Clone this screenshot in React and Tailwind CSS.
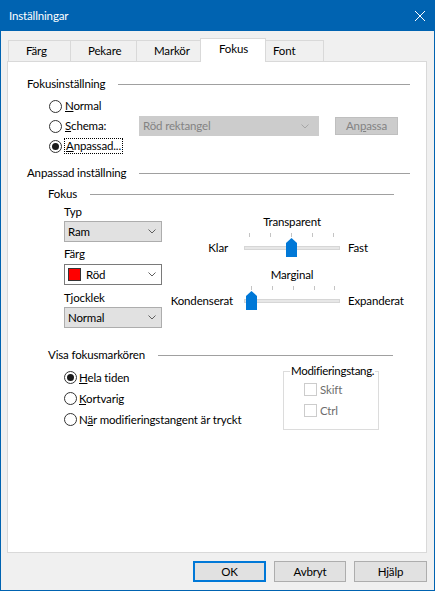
import React from "react";

const Chevron = ({ color = "#5f5f5f" }) => (
  <svg width="8" height="5" viewBox="0 0 8 5">
    <polyline points="0.5,0.5 4,4 7.5,0.5" fill="none" stroke={color} strokeWidth="1" />
  </svg>
);

const Radio = ({ checked }) => (
  <span className="flex h-[13px] w-[13px] shrink-0 items-center justify-center rounded-full border border-[#333333] bg-white">
    {checked && <span className="h-[7px] w-[7px] rounded-full bg-[#1a1a1a]" />}
  </span>
);

const Section = ({ label, className }) => (
  <div className={`flex h-[16px] items-center ${className}`}>
    <span className="whitespace-nowrap">{label}</span>
    <div className="ml-[13px] h-px flex-1 bg-[#a0a0a0]" />
  </div>
);

const Combo = ({ children, white }) => (
  <div
    className={
      white
        ? "flex h-[21px] items-center justify-between border border-[#7a7a7a] bg-white pl-[3px] pr-[5px]"
        : "flex h-[21px] items-center justify-between border border-[#adadad] bg-[#e1e1e1] pl-[3px] pr-[5px]"
    }
  >
    <div className="flex items-center">{children}</div>
    <Chevron />
  </div>
);

// track + ticks + thumb
const SliderTrack = ({ ticks, thumb }) => (
  <svg width="96" height="28" viewBox="0 0 96 28" className="shrink-0">
    {ticks.map((t) => (
      <line key={t} x1={t + 0.5} y1="3" x2={t + 0.5} y2="7" stroke="#c4c4c4" />
    ))}
    <rect x="0.5" y="16.5" width="95" height="3" fill="#e7e7e7" stroke="#d6d6d6" />
    <path
      d={`M${thumb} 5 L${thumb + 5.5} 0 L${thumb + 11} 5 L${thumb + 11} 19 L${thumb} 19 Z`}
      transform="translate(0 8)"
      fill="#0078d7"
    />
  </svg>
);

const Slider = ({ title, left, right, leftPad, ticks, thumb, className }) => (
  <div className={className}>
    <div className="ml-[82px] w-[96px] text-center">{title}</div>
    <div className="flex">
      <div className={`w-[82px] whitespace-nowrap pt-[10px] text-right ${leftPad}`}>{left}</div>
      <SliderTrack ticks={ticks} thumb={thumb} />
      <div className="ml-[8px] whitespace-nowrap pt-[10px]">{right}</div>
    </div>
  </div>
);

const Checkbox = () => (
  <span className="h-[13px] w-[13px] shrink-0 border border-[#cccccc] bg-white" />
);

const tabs = [
  { name: "Färg", w: "w-[62px] pl-[17px]" },
  { name: "Pekare", w: "w-[66px] pl-[17px]" },
  { name: "Markör", w: "w-[64px] pl-[17px]" },
  { name: "Fokus", w: "w-[66px] pl-[18px]", active: true },
  { name: "Font", w: "w-[58px] pl-[7px]", last: true },
];

export default function App() {
  return (
    <div className="flex h-[591px] w-[435px] flex-col border-x border-b border-[#0063b1] bg-[#f0f0f0] font-[Lato,sans-serif] text-[11.5px] leading-[16px] tracking-[-0.15px] text-black">
      {/* Title bar */}
      <div className="flex h-[31px] shrink-0 items-center justify-between bg-[#0063b1] pl-[8px] pr-[9px] text-white">
        <span>Inställningar</span>
        <svg width="10" height="10" viewBox="0 0 10 10">
          <path d="M0 0 L10 10 M10 0 L0 10" stroke="#ffffff" strokeWidth="1" />
        </svg>
      </div>

      <div className="flex flex-1 flex-col pl-[6px] pr-[7px] pt-[7px]">
        {/* Tabs */}
        <div className="relative z-10 ml-[1px] flex h-[23px] items-end">
          {tabs.map((t) =>
            t.active ? (
              <div
                key={t.name}
                className={`-mb-px h-[24px] border-x border-t border-[#d9d9d9] bg-white pt-[2px] ${t.w}`}
              >
                {t.name}
              </div>
            ) : (
              <div
                key={t.name}
                className={`h-[21px] border-t border-[#d9d9d9] bg-[#f0f0f0] pt-[2px] ${t.w} ${
                  t.last ? "border-r" : "border-l"
                }`}
              >
                {t.name}
              </div>
            )
          )}
        </div>

        {/* Panel */}
        <div className="h-[492px] border border-[#d9d9d9] bg-white pt-[14px]">
          <Section label="Fokusinställning" className="ml-[19px] mr-[16px]" />
          <div className="mt-[4px] pl-[41px]">
            <div className="flex h-[20px] items-center">
              <Radio />
              <span className="ml-[3px]">
                <u>N</u>ormal
              </span>
            </div>
            <div className="flex h-[20px] items-center">
              <div className="flex w-[90px] items-center">
                <Radio />
                <span className="ml-[3px]">
                  <u>S</u>chema:
                </span>
              </div>
              <div className="flex h-[20px] w-[180px] items-center justify-between border border-[#cccccc] bg-[#cccccc] pl-[3px] pr-[9px] text-[#838383]">
                <span>Röd rektangel</span>
                <Chevron color="#a6a6a6" />
              </div>
              <div className="ml-[16px] flex h-[18px] w-[63px] items-center justify-center border border-[#bfbfbf] bg-[#cccccc] text-[#838383]">
                <span>
                  An<u>p</u>assa
                </span>
              </div>
            </div>
            <div className="flex h-[20px] items-center">
              <Radio checked />
              <span className="ml-[2px] border border-dotted border-black px-px leading-[14px]">
                <u>A</u>npassad...
              </span>
            </div>
          </div>

          <Section label="Anpassad inställning" className="ml-[19px] mr-[16px] mt-[9px]" />
          <Section label="Fokus" className="ml-[40px] mr-[32px] mt-[5px]" />

          <div className="mt-[2px] flex">
            <div className="ml-[56px] w-[98px]">
              <div>Typ</div>
              <div className="mt-[1px]">
                <Combo>Ram</Combo>
              </div>
              <div className="mt-[4px]">Färg</div>
              <div className="mt-[2px]">
                <Combo white>
                  <span className="h-[13px] w-[13px] border border-[#333333] bg-[#ff0000]" />
                  <span className="ml-[5px]">Röd</span>
                </Combo>
              </div>
              <div className="mt-[5px]">Tjocklek</div>
              <div className="mt-[1px]">
                <Combo>Normal</Combo>
              </div>
            </div>

            <div className="mt-[10px]">
              <Slider
                title="Transparent"
                left="Klar"
                right="Fast"
                leftPad="pr-[16px]"
                ticks={[5, 26, 47, 68, 89]}
                thumb={42}
              />
              <Slider
                className="mt-[9px]"
                title="Marginal"
                left="Kondenserat"
                right="Expanderat"
                leftPad="pr-[11px]"
                ticks={[7, 28, 49, 70, 90]}
                thumb={2}
              />
            </div>
          </div>

          <Section label="Visa fokusmarkören" className="ml-[40px] mr-[33px] mt-[19px]" />

          <div className="flex justify-between pl-[56px] pr-[47px]">
            <div className="mt-[4px]">
              <div className="flex h-[21px] items-center">
                <Radio checked />
                <span className="ml-[2px]">
                  <u>H</u>ela tiden
                </span>
              </div>
              <div className="flex h-[21px] items-center">
                <Radio />
                <span className="ml-[2px]">
                  <u>K</u>ortvarig
                </span>
              </div>
              <div className="flex h-[21px] items-center">
                <Radio />
                <span className="ml-[2px]">
                  N<u>ä</u>r modifieringstangent är tryckt
                </span>
              </div>
            </div>

            <fieldset className="w-[96px] min-w-0 shrink-0 border border-[#dcdcdc] pb-[3px]">
              <legend className="ml-[6px] whitespace-nowrap px-[1px] tracking-[-0.3px]">Modifieringstang.</legend>
              <div className="pl-[20px] text-[#6d6d6d]">
                <div className="flex h-[21px] items-center">
                  <Checkbox />
                  <span className="ml-[3px]">Skift</span>
                </div>
                <div className="flex h-[21px] items-center">
                  <Checkbox />
                  <span className="ml-[3px]">Ctrl</span>
                </div>
              </div>
            </fieldset>
          </div>
        </div>

        {/* Footer buttons */}
        <div className="mt-[8px] flex justify-end gap-[8px]">
          <button className="h-[21px] w-[73px] border-2 border-[#0078d7] bg-[#e1e1e1] leading-[16px]">OK</button>
          <button className="h-[21px] w-[72px] border border-[#adadad] bg-[#e1e1e1] leading-[16px]">Avbryt</button>
          <button className="h-[21px] w-[73px] border border-[#adadad] bg-[#e1e1e1] leading-[16px]">Hjälp</button>
        </div>
      </div>
    </div>
  );
}
